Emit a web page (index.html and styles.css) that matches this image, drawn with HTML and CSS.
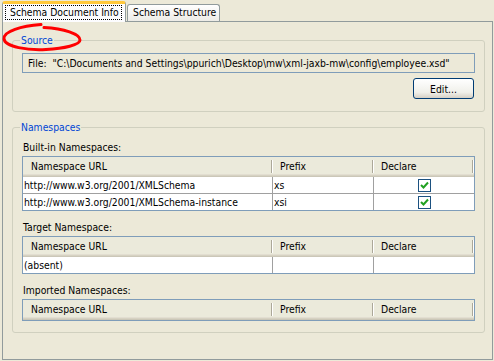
FILE: index.html
```html
<!DOCTYPE html>
<html>
<head>
<meta charset="utf-8">
<link rel="stylesheet" href="styles.css">
</head>
<body>
<div class="tabs">
  <div class="tab active"><span class="focus">Schema Document Info</span></div>
  <div class="tab">Schema Structure</div>
</div>
<div class="panel">
  <fieldset class="group source">
    <legend>Source</legend>
    <div class="field">File:&nbsp; "C:\Documents and Settings\ppurich\Desktop\mw\xml-jaxb-mw\config\employee.xsd"</div>
    <div class="btnrow"><button class="btn">Edit...</button></div>
  </fieldset>
  <fieldset class="group ns">
    <legend>Namespaces</legend>
    <div class="label">Built-in Namespaces:</div>
    <div class="table">
      <div class="hdr"><div class="hc">Namespace URL</div><div class="hc">Prefix</div><div class="hc">Declare</div></div>
      <div class="row"><div class="c">http://www.w3.org/2001/XMLSchema</div><div class="c">xs</div><div class="c cb"><span class="check"><svg width="11" height="11" viewBox="0 0 11 11"><path d="M2 5 L4.5 7.5 L9 2.5" fill="none" stroke="#21a121" stroke-width="2"/></svg></span></div></div>
      <div class="row"><div class="c">http://www.w3.org/2001/XMLSchema-instance</div><div class="c">xsi</div><div class="c cb"><span class="check"><svg width="11" height="11" viewBox="0 0 11 11"><path d="M2 5 L4.5 7.5 L9 2.5" fill="none" stroke="#21a121" stroke-width="2"/></svg></span></div></div>
    </div>
    <div class="label">Target Namespace:</div>
    <div class="table">
      <div class="hdr"><div class="hc">Namespace URL</div><div class="hc">Prefix</div><div class="hc">Declare</div></div>
      <div class="row"><div class="c">(absent)</div><div class="c"></div><div class="c"></div></div>
    </div>
    <div class="label">Imported Namespaces:</div>
    <div class="table last">
      <div class="hdr"><div class="hc">Namespace URL</div><div class="hc">Prefix</div><div class="hc">Declare</div></div>
    </div>
  </fieldset>
</div>
<svg class="ellipse" width="90" height="60" viewBox="0 0 90 60">
  <path d="M41 24.5 C22 26 3 31 4 39 C5 47 28 50.5 46 49.5 C64 48.5 80 45 80 40 C80 34 64 28.5 44 27.5" fill="none" stroke="#ff0000" stroke-width="3" stroke-linecap="round"/>
</svg>
</body>
</html>
```

FILE: styles.css
```css
html, body {
  margin: 0;
  padding: 0;
}
body {
  width: 494px;
  height: 361px;
  background: #ece9d8;
  font-family: "DejaVu Sans Condensed", "DejaVu Sans", sans-serif;
  font-size: 10.3px;
  color: #000;
  position: relative;
  overflow: hidden;
}
.tabs {
  display: flex;
  align-items: flex-end;
  height: 21px;
  padding-left: 2px;
  position: relative;
  z-index: 1;
}
.tab {
  box-sizing: border-box;
  height: 17px;
  width: 93px;
  margin-left: 1px;
  border: 1px solid #919b9c;
  border-bottom: none;
  border-radius: 3px 3px 0 0;
  background: linear-gradient(#ffffff, #ecebe6);
  line-height: 15px;
  padding-left: 5px;
  white-space: nowrap;
}
.tab.active {
  height: 21px;
  width: 124px;
  margin-left: 0;
  margin-bottom: -1px;
  border-top: 3px solid #ffc83c;
  background: #fcfcfe;
  padding: 1px 0 0 2px;
  line-height: 13px;
}
.tab.active .focus {
  display: inline-block;
  border: 1px dotted #000;
  padding: 0 2px 0 4px;
  line-height: 13px;
}
.panel {
  box-sizing: border-box;
  margin: 0 1px 0 2px;
  height: 339px;
  border: 1px solid #919b9c;
  padding: 11px 7px 0 9px;
}
.group {
  margin: 0;
  border: 1px solid #d0d0bf;
  border-radius: 3px;
  padding: 0 9px 0 9px;
  min-width: 0;
}
.group legend {
  color: #0046d5;
  padding: 0 1px;
  margin-left: -2px;
  line-height: 14px;
}
.source {
  padding-top: 6px;
  padding-bottom: 12px;
}
.field {
  box-sizing: border-box;
  height: 20px;
  border: 1px solid #7f9db9;
  line-height: 18px;
  padding-left: 5px;
  white-space: nowrap;
  overflow: hidden;
}
.btnrow {
  display: flex;
  justify-content: flex-end;
  margin-top: 5px;
  padding-right: 1px;
}
.btn {
  box-sizing: border-box;
  width: 61px;
  height: 21px;
  border: 1px solid #003c74;
  border-radius: 3px;
  background: linear-gradient(#ffffff, #f0f0ea 70%, #d6d0c5);
  font: inherit;
  color: #000;
  padding: 0;
}
.ns {
  margin-top: 8px;
  padding-top: 7px;
  padding-bottom: 11px;
}
.label {
  line-height: 13px;
  margin-bottom: 2px;
  padding-left: 1px;
}
.table {
  border: 1px solid #7f9db9;
  margin-bottom: 10px;
}
.table.last {
  margin-bottom: 0;
}
.hdr, .row {
  display: grid;
  grid-template-columns: 249px 101px 1fr;
}
.hdr {
  height: 20px;
  background: #ebeadb;
  box-shadow: inset 0 -1px #cbc7b8, inset 0 -2px #d6d2c2, inset 0 -3px #e2ded1;
}
.hc {
  line-height: 18px;
  padding-left: 8px;
  position: relative;
}
.hc + .hc::before {
  content: "";
  position: absolute;
  left: -1px;
  top: 3px;
  bottom: 4px;
  width: 1px;
  background: #aca899;
  box-shadow: 1px 0 #ffffff;
}
.hc:last-child::after {
  content: "";
  position: absolute;
  right: 1px;
  top: 3px;
  bottom: 4px;
  width: 1px;
  background: #aca899;
  box-shadow: 1px 0 #ffffff;
}
.row {
  height: 17px;
  background: #fff;
  border-top: 1px solid #a0a0a0;
  box-sizing: border-box;
}
.hdr + .row {
  border-top: none;
  height: 16px;
}
.c {
  line-height: 16px;
  padding-left: 1px;
  border-left: 1px solid #a0a0a0;
  white-space: nowrap;
  overflow: hidden;
}
.c:first-child {
  border-left: none;
}
.cb {
  display: flex;
  justify-content: center;
  align-items: center;
  padding: 0;
}
.check {
  box-sizing: border-box;
  width: 13px;
  height: 13px;
  border: 1px solid #1c5180;
  background: #fff;
  display: flex;
  align-items: center;
  justify-content: center;
}
.ellipse {
  position: absolute;
  left: 0;
  top: 0;
}
```
